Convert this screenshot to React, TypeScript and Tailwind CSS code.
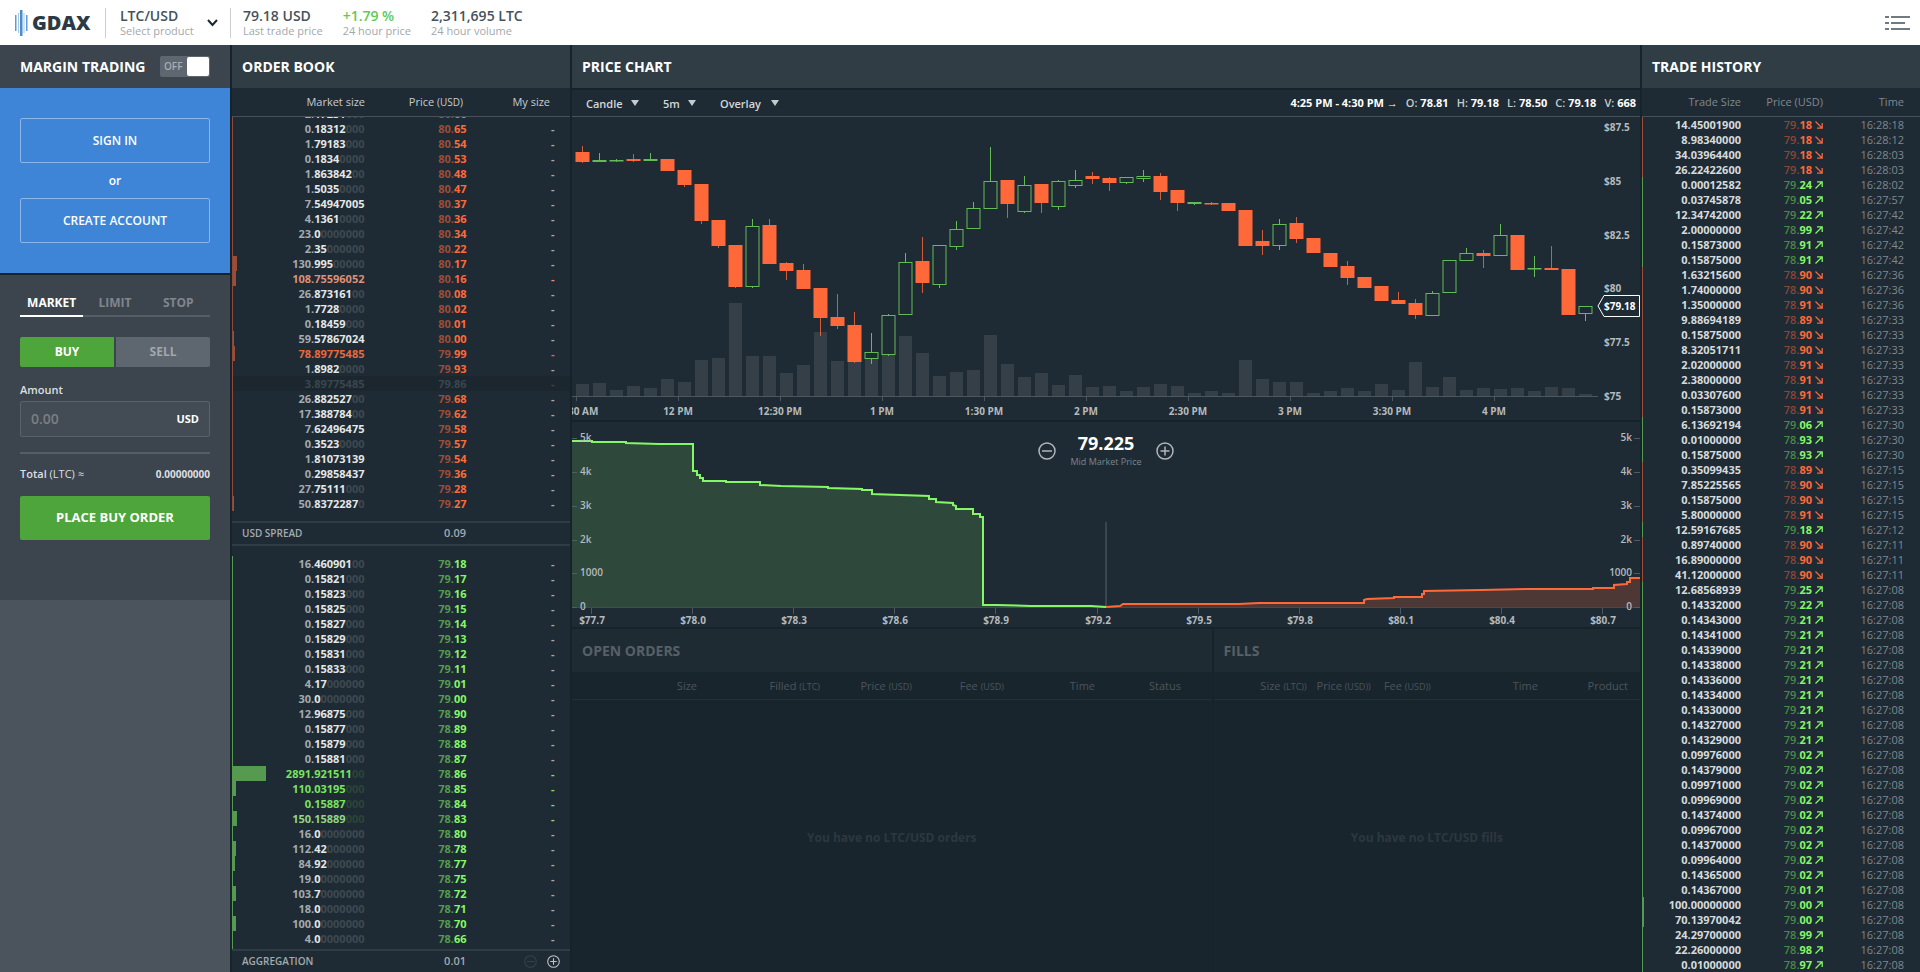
import { useState } from 'react';

type Side = 'ask' | 'bid';
type Tone = 'hot' | 'warm' | 'ghost';

interface BookRow {
  size: string;
  price: string;
  bar?: number;
  tone?: Tone;
}

// size, price, depth bar width, highlight
const asks: BookRow[] = [
  { size: '2.17231000', price: '80.66' },
  { size: '0.18312000', price: '80.65' },
  { size: '1.79183000', price: '80.54' },
  { size: '0.18340000', price: '80.53' },
  { size: '1.86384200', price: '80.48' },
  { size: '1.50350000', price: '80.47' },
  { size: '7.54947005', price: '80.37' },
  { size: '4.13610000', price: '80.36' },
  { size: '23.00000000', price: '80.34' },
  { size: '2.35000000', price: '80.22' },
  { size: '130.99500000', price: '80.17', bar: 5 },
  { size: '108.75596052', price: '80.16', bar: 4, tone: 'warm' },
  { size: '26.87316100', price: '80.08' },
  { size: '1.77280000', price: '80.02' },
  { size: '0.18459000', price: '80.01' },
  { size: '59.57867024', price: '80.00', bar: 2 },
  { size: '78.89775485', price: '79.99', bar: 3, tone: 'hot' },
  { size: '1.89820000', price: '79.93' },
  { size: '3.89775485', price: '79.86', tone: 'ghost' },
  { size: '26.88252700', price: '79.68' },
  { size: '17.38878400', price: '79.62' },
  { size: '7.62496475', price: '79.58' },
  { size: '0.35230000', price: '79.57' },
  { size: '1.81073139', price: '79.54' },
  { size: '0.29858437', price: '79.36' },
  { size: '27.75111000', price: '79.28' },
  { size: '50.83722870', price: '79.27', bar: 2 },
];

const bids: BookRow[] = [
  { size: '16.46090100', price: '79.18' },
  { size: '0.15821000', price: '79.17' },
  { size: '0.15823000', price: '79.16' },
  { size: '0.15825000', price: '79.15' },
  { size: '0.15827000', price: '79.14' },
  { size: '0.15829000', price: '79.13' },
  { size: '0.15831000', price: '79.12' },
  { size: '0.15833000', price: '79.11' },
  { size: '4.17000000', price: '79.01' },
  { size: '30.00000000', price: '79.00' },
  { size: '12.96875000', price: '78.90' },
  { size: '0.15877000', price: '78.89' },
  { size: '0.15879000', price: '78.88' },
  { size: '0.15881000', price: '78.87' },
  { size: '2891.92151100', price: '78.86', bar: 34, tone: 'hot' },
  { size: '110.03195000', price: '78.85', bar: 4, tone: 'hot' },
  { size: '0.15887000', price: '78.84', tone: 'hot' },
  { size: '150.15889000', price: '78.83', bar: 5, tone: 'warm' },
  { size: '16.00000000', price: '78.80' },
  { size: '112.42000000', price: '78.78', bar: 4 },
  { size: '84.92000000', price: '78.77', bar: 3 },
  { size: '19.00000000', price: '78.75' },
  { size: '103.70000000', price: '78.72', bar: 4 },
  { size: '18.00000000', price: '78.71' },
  { size: '100.00000000', price: '78.70', bar: 4 },
  { size: '4.00000000', price: '78.66' },
];

type Trade = [string, string, 'up' | 'down', string];

const trades: Trade[] = [
  ['14.45001900', '79.18', 'down', '16:28:18'],
  ['8.98340000', '79.18', 'down', '16:28:12'],
  ['34.03964400', '79.18', 'down', '16:28:03'],
  ['26.22422600', '79.18', 'down', '16:28:03'],
  ['0.00012582', '79.24', 'up', '16:28:02'],
  ['0.03745878', '79.05', 'up', '16:27:57'],
  ['12.34742000', '79.22', 'up', '16:27:42'],
  ['2.00000000', '78.99', 'up', '16:27:42'],
  ['0.15873000', '78.91', 'up', '16:27:42'],
  ['0.15875000', '78.91', 'up', '16:27:42'],
  ['1.63215600', '78.90', 'down', '16:27:36'],
  ['1.74000000', '78.90', 'down', '16:27:36'],
  ['1.35000000', '78.91', 'down', '16:27:36'],
  ['9.88694189', '78.89', 'down', '16:27:33'],
  ['0.15875000', '78.90', 'down', '16:27:33'],
  ['8.32051711', '78.90', 'down', '16:27:33'],
  ['2.02000000', '78.91', 'down', '16:27:33'],
  ['2.38000000', '78.91', 'down', '16:27:33'],
  ['0.03307600', '78.91', 'down', '16:27:33'],
  ['0.15873000', '78.91', 'down', '16:27:33'],
  ['6.13692194', '79.06', 'up', '16:27:30'],
  ['0.01000000', '78.93', 'up', '16:27:30'],
  ['0.15875000', '78.93', 'up', '16:27:30'],
  ['0.35099435', '78.89', 'down', '16:27:15'],
  ['7.85225565', '78.90', 'down', '16:27:15'],
  ['0.15875000', '78.90', 'down', '16:27:15'],
  ['5.80000000', '78.91', 'down', '16:27:15'],
  ['12.59167685', '79.18', 'up', '16:27:12'],
  ['0.89740000', '78.90', 'down', '16:27:11'],
  ['16.89000000', '78.90', 'down', '16:27:11'],
  ['41.12000000', '78.90', 'down', '16:27:11'],
  ['12.68568939', '79.25', 'up', '16:27:08'],
  ['0.14332000', '79.22', 'up', '16:27:08'],
  ['0.14343000', '79.21', 'up', '16:27:08'],
  ['0.14341000', '79.21', 'up', '16:27:08'],
  ['0.14339000', '79.21', 'up', '16:27:08'],
  ['0.14338000', '79.21', 'up', '16:27:08'],
  ['0.14336000', '79.21', 'up', '16:27:08'],
  ['0.14334000', '79.21', 'up', '16:27:08'],
  ['0.14330000', '79.21', 'up', '16:27:08'],
  ['0.14327000', '79.21', 'up', '16:27:08'],
  ['0.14329000', '79.21', 'up', '16:27:08'],
  ['0.09976000', '79.02', 'up', '16:27:08'],
  ['0.14379000', '79.02', 'up', '16:27:08'],
  ['0.09971000', '79.02', 'up', '16:27:08'],
  ['0.09969000', '79.02', 'up', '16:27:08'],
  ['0.14374000', '79.02', 'up', '16:27:08'],
  ['0.09967000', '79.02', 'up', '16:27:08'],
  ['0.14370000', '79.02', 'up', '16:27:08'],
  ['0.09964000', '79.02', 'up', '16:27:08'],
  ['0.14365000', '79.02', 'up', '16:27:08'],
  ['0.14367000', '79.01', 'up', '16:27:08'],
  ['100.00000000', '79.00', 'up', '16:27:08'],
  ['70.13970042', '79.00', 'up', '16:27:08'],
  ['24.29700000', '78.99', 'up', '16:27:08'],
  ['22.26000000', '78.98', 'up', '16:27:08'],
  ['0.01000000', '78.97', 'up', '16:27:08'],
];

// direction, high, body top, body bottom, low, volume
type Candle = ['u' | 'd', number, number, number, number, number];

const candles: Candle[] = [
  ['d', 29, 35, 45, 46, 12], ['u', 36, 43, 45, 45, 13], ['u', 42, 43, 44, 45, 6],
  ['d', 37, 42, 44, 45, 10], ['u', 36, 42, 44, 44, 8], ['d', 42, 42, 54, 54, 17],
  ['d', 53, 53, 68, 70, 14], ['d', 67, 67, 104, 107, 36], ['d', 103, 103, 129, 131, 38],
  ['d', 128, 128, 170, 171, 93], ['u', 102, 109, 170, 171, 40], ['d', 102, 108, 147, 147, 40],
  ['d', 145, 146, 154, 163, 23], ['d', 147, 153, 172, 172, 31], ['d', 171, 171, 201, 219, 64],
  ['d', 177, 200, 209, 212, 35], ['d', 195, 208, 245, 246, 34], ['u', 216, 235, 242, 247, 37],
  ['u', 197, 198, 238, 239, 41], ['u', 136, 145, 198, 198, 60], ['d', 120, 144, 166, 176, 43],
  ['u', 128, 128, 168, 171, 20], ['u', 104, 112, 130, 133, 24], ['u', 85, 91, 112, 112, 26],
  ['u', 30, 64, 92, 92, 61], ['d', 63, 63, 87, 101, 32], ['u', 59, 68, 95, 96, 19],
  ['d', 67, 67, 86, 96, 23], ['u', 63, 64, 90, 93, 11], ['u', 53, 63, 69, 71, 21],
  ['d', 55, 59, 62, 67, 9], ['d', 60, 61, 66, 74, 10], ['u', 60, 60, 66, 67, 5],
  ['u', 53, 59, 62, 65, 9], ['d', 56, 59, 75, 83, 12], ['d', 73, 73, 86, 94, 10],
  ['u', 85, 85, 87, 88, 3], ['d', 85, 86, 87, 88, 5], ['d', 86, 86, 94, 94, 3],
  ['d', 93, 93, 129, 129, 36], ['d', 113, 124, 129, 138, 17], ['u', 102, 107, 129, 133, 14],
  ['d', 100, 106, 122, 126, 14], ['d', 121, 121, 136, 136, 3], ['d', 136, 136, 150, 150, 5],
  ['d', 144, 149, 161, 168, 8], ['d', 160, 160, 171, 171, 5], ['d', 169, 169, 184, 184, 12],
  ['d', 175, 183, 187, 187, 6], ['d', 182, 186, 198, 202, 34], ['u', 174, 176, 199, 199, 9],
  ['u', 143, 143, 176, 176, 19], ['u', 131, 136, 144, 144, 6], ['d', 133, 136, 139, 151, 8],
  ['u', 107, 118, 139, 139, 7], ['d', 118, 118, 153, 153, 8], ['u', 139, 151, 152, 160, 5],
  ['d', 129, 151, 153, 153, 9], ['d', 152, 152, 198, 198, 8], ['u', 189, 189, 197, 204, 2],
];

const timeTicks = ['11:30 AM', '12 PM', '12:30 PM', '1 PM', '1:30 PM', '2 PM', '2:30 PM', '3 PM', '3:30 PM', '4 PM'];
const priceTicks = ['$87.5', '$85', '$82.5', '$80', '$77.5', '$75'];
const depthTicks = ['0', '1000', '2k', '3k', '4k', '5k'];
const depthPrices = ['$77.7', '$78.0', '$78.3', '$78.6', '$78.9', '$79.2', '$79.5', '$79.8', '$80.1', '$80.4', '$80.7'];

const bidDepth =
  '0,19 20,19 20,20 54,20 54,21 87,22 121,22 121,49 125,49 125,53 128,53 128,56 131,56 131,59 154,59 154,60 188,60 188,63 209,64 256,65 256,66 290,67 290,68 300,68 300,72 357,74 357,77 364,77 364,80 381,81 381,83 384,84 384,87 401,87 401,92 408,92 408,95 411,95 411,183 425,183 459,184 519,184 534,185';
const askDepth =
  '534,185 548,184 551,182 667,182 687,181 792,181 792,178 795,177 822,176 822,175 850,175 850,172 852,172 852,169 909,168 957,167 1021,167 1021,166 1042,166 1042,163 1055,162 1055,160 1058,160 1058,156 1068,156';

function sizeColors(side: Side, tone?: Tone) {
  if (tone === 'ghost') return ['text-[#3a464e]', 'text-[#3a464e]', 'text-[#3a464e]'];
  if (tone === 'hot' && side === 'ask') return ['text-[#e8693f]', 'text-[#e8693f]', 'text-[#5a3a35]'];
  if (tone === 'warm' && side === 'ask') return ['text-[#de9078]', 'text-[#de9078]', 'text-[#5a3a35]'];
  if (tone === 'hot') return ['text-[#7ae35f]', 'text-[#7ae35f]', 'text-[#2b4538]'];
  if (tone === 'warm') return ['text-[#93d685]', 'text-[#93d685]', 'text-[#2b4538]'];
  return ['text-[#a4aaae]', 'text-[#e4e7e8]', 'text-[#3d4951]'];
}

function BookTable({ rows, side }: { rows: BookRow[]; side: Side }) {
  const line = side === 'ask' ? 'border-[#8f4a37]' : 'border-[#559a50]';
  const bar = side === 'ask' ? 'bg-[#9c4d38]' : 'bg-[#559a50]';
  const whole = side === 'ask' ? 'text-[#9c4d38]' : 'text-[#559a50]';
  const cents = side === 'ask' ? 'text-[#ff6939]' : 'text-[#84f766]';

  return (
    <table className={`w-full table-fixed shrink-0 border-collapse border-l ${line} text-[11px] leading-[15px] font-bold`}>
      <colgroup>
        <col className="w-[132px]" />
        <col className="w-[102px]" />
        <col className="w-[88px]" />
        <col className="w-4" />
      </colgroup>
      <tbody>
        {rows.map((row) => {
          const [, int, dec, zeros] = row.size.match(/^(\d+\.)(\d+?)(0*)$/) ?? ['', '', '', ''];
          const [c1, c2, c3] = sizeColors(side, row.tone);
          const [p1, p2] = row.price.split('.');
          const ghost = row.tone === 'ghost';
          return (
            <tr key={row.price} className={ghost ? 'bg-[#1b262e]' : ''}>
              <td className="relative h-[15px] p-0 text-right">
                {row.bar && <span className={`absolute left-0 top-0 h-full ${bar}`} style={{ width: row.bar - 1 }} />}
                <span className={c1}>{int}</span>
                <span className={c2}>{dec}</span>
                <span className={c3}>{zeros}</span>
              </td>
              <td className="h-[15px] p-0 text-right">
                <span className={ghost ? 'text-[#3a464e]' : whole}>{p1}.</span>
                <span className={ghost ? 'text-[#3a464e]' : cents}>{p2}</span>
              </td>
              <td className={`h-[15px] p-0 text-right ${row.tone ? c1 : 'text-[#a4aaae]'}`}>-</td>
              <td className="p-0" />
            </tr>
          );
        })}
      </tbody>
    </table>
  );
}

function CircleIcon({ plus, size }: { plus?: boolean; size: number }) {
  return (
    <svg width={size} height={size} viewBox="0 0 18 18" fill="none" stroke="currentColor" strokeWidth="1.5">
      <circle cx="9" cy="9" r="8" />
      <path d={plus ? 'M4.5 9h9M9 4.5v9' : 'M4 9h10'} />
    </svg>
  );
}

function PanelTitle({ children, muted }: { children: string; muted?: boolean }) {
  return (
    <h2
      className={`flex h-[43px] shrink-0 items-center px-2.5 text-sm font-bold ${
        muted ? 'bg-[#1f2b33] text-[#566067]' : 'bg-[#303d45] text-white'
      }`}
    >
      {children}
    </h2>
  );
}

function Header() {
  const stats = [
    ['79.18 USD', 'Last trade price', 'text-[#45525b]'],
    ['+1.79 %', '24 hour price', 'text-[#61c954]'],
    ['2,311,695 LTC', '24 hour volume', 'text-[#45525b]'],
  ];
  return (
    <header className="flex h-[45px] shrink-0 items-center bg-white pl-[15px] pr-2.5">
      <a href="#" className="flex w-[90px] items-center gap-1" aria-label="GDAX">
        <svg width="13" height="26" viewBox="0 0 13 26">
          <path d="M0 5h1.500v16H0zM11 5h1.500v16H11z" fill="#5f9bd5" />
          <path d="M5 0h2.500v26H5z" fill="#4a8ccd" />
          <path d="M3 3h1v20H3zM8.500 3h1v20h-1z" fill="#a9c8e8" />
        </svg>
        <span className="text-xl leading-[26px] font-extrabold text-[#2d3a45]">GDAX</span>
      </a>
      <button className="flex h-[30px] w-[126px] items-center justify-between border-x border-[#c9cdd0] pl-3.5 pr-3 text-left">
        <span className="flex flex-col">
          <span className="text-sm leading-4 font-semibold text-[#45525b]">LTC/USD</span>
          <span className="text-[11px] leading-[13px] text-[#a3a8ac]">Select product</span>
        </span>
        <svg width="11" height="8" viewBox="0 0 11 8" fill="none" stroke="#1c2830" strokeWidth="2">
          <path d="M1 1l4.500 5L10 1" />
        </svg>
      </button>
      <dl className="flex gap-5 pl-3">
        {stats.map(([value, label, color]) => (
          <div key={label} className="flex flex-col">
            <dd className={`text-sm leading-4 font-semibold ${color}`}>{value}</dd>
            <dt className="text-[11px] leading-[13px] text-[#a3a8ac]">{label}</dt>
          </div>
        ))}
      </dl>
      <button className="ml-auto" aria-label="Menu">
        <svg width="25" height="14" viewBox="0 0 25 14" fill="#6f7a81">
          <path d="M0 0h4v2H0zM6 0h19v2H6zM0 6h4v2H0zM6 6h14v2H6zM0 12h4v2H0zM6 12h19v2H6z" />
        </svg>
      </button>
    </header>
  );
}

function Sidebar() {
  const [tab, setTab] = useState('MARKET');
  const [side, setSide] = useState('BUY');

  return (
    <aside className="flex flex-col bg-[#4b535d] text-white">
      <div className="flex h-[43px] items-center justify-between bg-[#3c454e] px-5">
        <h2 className="text-sm font-bold">MARGIN TRADING</h2>
        <button role="switch" aria-checked="false" className="flex h-[21px] w-[50px] items-center justify-between rounded-xs bg-[#5e666f] pl-1 pr-px text-[10px] font-semibold text-[#a8adb2]">
          OFF
          <span className="h-[19px] w-[22px] rounded-xs bg-white" />
        </button>
      </div>

      <div className="flex flex-col bg-[#3e85d8] px-5 py-[30px] text-xs font-semibold">
        <button className="h-[45px] rounded-xs border border-[#8bb6e8]">SIGN IN</button>
        <p className="py-2 text-center leading-[19px]">or</p>
        <button className="h-[45px] rounded-xs border border-[#8bb6e8]">CREATE ACCOUNT</button>
      </div>

      <form className="flex flex-col border-t-2 border-[#17232b] bg-[#3c454e] px-5 pb-[60px]" onSubmit={(e) => e.preventDefault()}>
        <div className="mt-4 grid grid-cols-3 text-xs font-bold">
          {['MARKET', 'LIMIT', 'STOP'].map((name) => (
            <button
              key={name}
              type="button"
              onClick={() => setTab(name)}
              className={`h-[26px] border-b-2 ${tab === name ? 'border-white text-white' : 'border-[#555d66] text-[#80868c]'}`}
            >
              {name}
            </button>
          ))}
        </div>
        <div className="mt-5 grid grid-cols-2 gap-0.5 text-xs font-bold">
          <button type="button" onClick={() => setSide('BUY')} className={`h-[30px] rounded-l-xs ${side === 'BUY' ? 'bg-[#4ea53c] text-white' : 'bg-[#5e666f] text-[#a2a7ac]'}`}>
            BUY
          </button>
          <button type="button" onClick={() => setSide('SELL')} className={`h-[30px] rounded-r-xs ${side === 'SELL' ? 'bg-[#e0552b] text-white' : 'bg-[#5e666f] text-[#a2a7ac]'}`}>
            SELL
          </button>
        </div>
        <label htmlFor="amount" className="mt-[15px] text-[11px] leading-[15px] font-semibold text-[#dcdfe1]">
          Amount
        </label>
        <div className="mt-1 flex h-9 items-center rounded-xs border border-[#59616a] bg-[#434c55] px-2.5">
          <input id="amount" placeholder="0.00" className="min-w-0 flex-1 bg-transparent text-sm font-semibold outline-none placeholder:text-[#7d7f80]" />
          <span className="text-[11px] font-bold">USD</span>
        </div>
        <hr className="mt-[15px] border-t-2 border-[#555d66]" />
        <div className="mt-2.5 flex h-5 items-center justify-between text-[11px] font-semibold text-[#dcdfe1]">
          <span>
            Total <span className="font-normal">(LTC) ≈</span>
          </span>
          <span className="text-[10px] font-bold">0.00000000</span>
        </div>
        <button type="submit" className="mt-3 h-11 rounded-xs bg-[#4ea53c] text-[13px] font-bold">
          PLACE BUY ORDER
        </button>
      </form>
    </aside>
  );
}

function OrderBook() {
  return (
    <section className="flex min-h-0 flex-col bg-[#1f2b34]">
      <PanelTitle>ORDER BOOK</PanelTitle>
      <div className="grid h-[29px] shrink-0 grid-cols-[133px_98px_87px_auto] items-center border-b border-[#46525a] text-right text-[11px] text-[#c6cbce]">
        <span>Market size</span>
        <span>
          Price <span className="text-[10px]">(USD)</span>
        </span>
        <span>My size</span>
      </div>
      <div className="flex min-h-0 flex-1 flex-col justify-end overflow-hidden pb-2.5">
        <BookTable rows={asks} side="ask" />
      </div>
      <div className="flex h-[25px] shrink-0 items-center border-y-2 border-[#303c44] px-2.5 text-[10px] font-semibold text-[#a4aaae]">
        <span className="w-[154px]">USD SPREAD</span>
        <span className="w-[70px] text-right text-[11px]">0.09</span>
      </div>
      <div className="flex min-h-0 flex-1 flex-col overflow-hidden pt-2.5">
        <BookTable rows={bids} side="bid" />
        <div className="flex-1 border-l border-[#559a50]" />
      </div>
      <div className="flex h-[23px] shrink-0 items-center border-t-2 border-[#303c44] px-2.5 text-[10px] font-semibold text-[#a4aaae]">
        <span className="w-[154px]">AGGREGATION</span>
        <span className="w-[70px] text-right text-[11px]">0.01</span>
        <button className="ml-auto text-[#36424a]" aria-label="Decrease aggregation">
          <CircleIcon size={13} />
        </button>
        <button className="ml-2.5 text-[#c0c5c8]" aria-label="Increase aggregation">
          <CircleIcon plus size={13} />
        </button>
      </div>
    </section>
  );
}

function PriceChart() {
  return (
    <svg viewBox="0 0 1068 303" className="block w-full text-[10px] font-bold" fill="#b4babd">
      {candles.map(([dir, high, top, bottom, low, vol], i) => {
        const x = 3 + i * 17;
        const color = dir === 'u' ? '#62bb55' : '#ff6939';
        return (
          <g key={i}>
            <rect x={x + 1} y={279 - vol} width="13" height={vol} fill="#343f47" />
            <path d={`M${x + 7.5} ${high}V${top}M${x + 7.5} ${bottom}V${low}`} stroke={color} opacity={dir === 'u' ? 1 : 0.8} />
            <rect
              x={x + 1}
              y={top + 0.5}
              width="13"
              height={Math.max(bottom - top - 1, 0.5)}
              fill={dir === 'u' ? '#1f2b34' : color}
              stroke={color}
            />
          </g>
        );
      })}
      <path d="M0 279.500H1026" stroke="#4c575f" />
      {timeTicks.map((label, i) => (
        <g key={label} textAnchor="middle">
          <path d={`M${4.5 + i * 102} 279v5`} stroke="#4c575f" />
          <text x={4 + i * 102} y="298">{label}</text>
        </g>
      ))}
      {priceTicks.map((label, i) => (
        <text key={label} x="1032" y={14 + Math.round(i * 53.8)}>{label}</text>
      ))}
      <path d="M1026 189L1032 178.500H1067.500V199.500H1032Z" fill="#1f2b34" stroke="#fff" />
      <text x="1032" y="193" fill="#fff">$79.18</text>
    </svg>
  );
}

function DepthChart() {
  return (
    <svg viewBox="0 0 1068 205" className="block w-full text-[10px] font-semibold" fill="#b4babd">
      <path d="M534 100V185" stroke="#3a464e" strokeWidth="2" />
      <polygon points={`0,185 ${bidDepth}`} fill="#2e493b" />
      <polygon points={`${askDepth} 1068,185`} fill="#4e3835" />
      <path d="M0 185.500H1068" stroke="#3f4c53" />
      <polyline points={bidDepth} fill="none" stroke="#84f766" strokeWidth="2" />
      <polyline points={askDepth} fill="none" stroke="#ff6939" strokeWidth="2" />
      {depthTicks.map((label, i) => {
        const y = 185 - Math.round(i * 33.7);
        return (
          <g key={label}>
            <path d={`M0 ${y + 0.5}h5M1062 ${y + 0.5}h6`} stroke="#4f5c60" />
            <text x="8" y={y + 3}>{label}</text>
            <text x="1060" y={y + 3} textAnchor="end">{label}</text>
          </g>
        );
      })}
      {depthPrices.map((label, i) => {
        const x = 20 + Math.round(i * 101.1);
        return (
          <g key={label} textAnchor="middle" className="font-bold">
            <path d={`M${x - 0.5} 186v6`} stroke="#4c575f" />
            <text x={x} y="202">{label}</text>
          </g>
        );
      })}
    </svg>
  );
}

function ChartSelect({ label, options, width }: { label: string; options: string[]; width: string }) {
  return (
    <label className={`relative flex items-center ${width}`}>
      <select aria-label={label} className="w-full appearance-none bg-transparent text-[11px] leading-[15px] font-semibold text-[#d3d7d9] outline-none">
        {options.map((option) => (
          <option key={option}>{option}</option>
        ))}
      </select>
      <svg width="8" height="6" viewBox="0 0 8 6" className="pointer-events-none absolute right-0 top-1 fill-[#c6cbce]">
        <path d="M0 0h8L4 6z" />
      </svg>
    </label>
  );
}

interface Column {
  name: string;
  unit?: string;
  width: string;
}

const orderColumns: Column[] = [
  { name: 'Size', width: 'w-[125px]' },
  { name: 'Filled', unit: '(LTC)', width: 'w-[123px]' },
  { name: 'Price', unit: '(USD)', width: 'w-[92px]' },
  { name: 'Fee', unit: '(USD)', width: 'w-[92px]' },
  { name: 'Time', width: 'w-[91px]' },
  { name: 'Status', width: 'w-[86px]' },
  { name: '', width: 'w-[31px]' },
];

const fillColumns: Column[] = [
  { name: 'Size', unit: '(LTC))', width: 'w-[93px]' },
  { name: 'Price', unit: '(USD))', width: 'w-[64px]' },
  { name: 'Fee', unit: '(USD))', width: 'w-[60px]' },
  { name: 'Time', width: 'w-[107px]' },
  { name: 'Product', width: 'w-[90px]' },
  { name: '', width: 'w-[12px]' },
];

function EmptyPanel({ title, columns, message }: { title: string; columns: Column[]; message: string }) {
  return (
    <section className="flex min-w-0 flex-col bg-[#19252d]">
      <PanelTitle muted>{title}</PanelTitle>
      <table className="w-full table-fixed border-collapse border-b border-[#233038] text-[11px] text-[#4a555c]">
        <thead>
          <tr>
            {columns.map((col) => (
              <th key={col.name} className={`h-[27px] p-0 pt-0.5 text-right font-normal whitespace-nowrap ${col.width}`}>
                {col.name} {col.unit && <span className="text-[9px]">{col.unit}</span>}
              </th>
            ))}
          </tr>
        </thead>
      </table>
      <p className="flex flex-1 items-center justify-center pt-1 text-xs font-bold text-[#2c383f]">{message}</p>
    </section>
  );
}

function Charts() {
  const ohlc = [
    ['O:', '78.81'],
    ['H:', '79.18'],
    ['L:', '78.50'],
    ['C:', '79.18'],
    ['V:', '668'],
  ];
  return (
    <main className="flex min-h-0 flex-col gap-0.5">
      <PanelTitle>PRICE CHART</PanelTitle>
      <section className="bg-[#1f2b34]">
        <div className="flex h-[27px] items-center justify-between border-b border-[#46525a] pl-3.5 pr-1">
          <div className="flex gap-6">
            <ChartSelect label="Chart type" options={['Candle', 'Line']} width="w-[53px]" />
            <ChartSelect label="Interval" options={['5m', '1m', '15m', '1h']} width="w-[33px]" />
            <ChartSelect label="Overlay" options={['Overlay', 'EMA12']} width="w-[59px]" />
          </div>
          <div className="flex gap-2 text-[11px] font-bold text-white">
            <span>4:25 PM - 4:30 PM →</span>
            {ohlc.map(([key, value]) => (
              <span key={key}>
                <span className="font-semibold text-[#c6cbce]">{key}</span> {value}
              </span>
            ))}
          </div>
        </div>
        <PriceChart />
      </section>
      <section className="relative bg-[#1f2b34]">
        <DepthChart />
        <div className="absolute inset-x-0 top-2.5 flex justify-center text-[#b0b6ba]">
          <div className="flex w-[136px] items-center justify-between">
            <button aria-label="Zoom out">
              <CircleIcon size={18} />
            </button>
            <div className="text-center">
              <p className="text-lg leading-[22px] font-bold text-white">79.225</p>
              <p className="text-[9px] leading-4 text-[#7c858b]">Mid Market Price</p>
            </div>
            <button aria-label="Zoom in">
              <CircleIcon plus size={18} />
            </button>
          </div>
        </div>
      </section>
      <div className="grid min-h-0 flex-1 grid-cols-[3fr_2fr] gap-0.5">
        <EmptyPanel title="OPEN ORDERS" columns={orderColumns} message="You have no LTC/USD orders" />
        <EmptyPanel title="FILLS" columns={fillColumns} message="You have no LTC/USD fills" />
      </div>
    </main>
  );
}

function TradeHistory() {
  return (
    <section className="min-h-0 overflow-hidden bg-[#1f2b34]">
      <PanelTitle>TRADE HISTORY</PanelTitle>
      <table className="w-full table-fixed border-separate border-spacing-0 text-right text-[11px] leading-[15px]">
        <thead>
          <tr className="text-[#7f888e]">
            <th className="h-[29px] w-[99px] border-b border-[#46525a] p-0 pb-px font-normal">Trade Size</th>
            <th className="w-[82px] border-b border-[#46525a] p-0 pb-px font-normal">Price (USD)</th>
            <th className="border-b border-[#46525a] p-0 pr-4 pb-px font-normal">Time</th>
          </tr>
        </thead>
        <tbody>
          {trades.map(([size, price, dir, time], i) => {
            const up = dir === 'up';
            const [whole, cents] = price.split('.');
            const bar = Math.floor(parseFloat(size) / 35);
            return (
              <tr key={i}>
                <td className={`relative h-[15px] border-l p-0 font-bold text-[#d6dadc] ${up ? 'border-[#559a50]' : 'border-[#9c4d38]'}`}>
                  {bar > 1 && <span className="absolute left-0 top-0 h-full bg-[#559a50]" style={{ width: bar - 1 }} />}
                  {size}
                </td>
                <td className="h-[15px] p-0">
                  <span className="flex items-center justify-end gap-[3px]">
                    <span className="font-semibold">
                      <span className={up ? 'text-[#4a8a48]' : 'text-[#8c4638]'}>{whole}.</span>
                      <span className={`font-bold ${up ? 'text-[#84f766]' : 'text-[#ff6939]'}`}>{cents}</span>
                    </span>
                    <svg width="8" height="8" viewBox="0 0 8 8" fill="none" stroke={up ? '#84f766' : '#f0683f'}>
                      <path d={up ? 'M.5 7.500L7 1M2 .8h5.200V6' : 'M.5.5L7 7M7.200 2v5.200H2'} strokeWidth="1.3" />
                    </svg>
                  </span>
                </td>
                <td className="h-[15px] p-0 pr-4 text-[#7f888e]">{time}</td>
              </tr>
            );
          })}
        </tbody>
      </table>
    </section>
  );
}

export default function App() {
  return (
    <div className="flex h-screen flex-col overflow-hidden bg-[#17232b] font-['Open_Sans',sans-serif]">
      <Header />
      <div className="grid min-h-0 flex-1 grid-cols-[230px_338px_minmax(0,1fr)_278px] grid-rows-[minmax(0,1fr)] gap-0.5">
        <Sidebar />
        <OrderBook />
        <Charts />
        <TradeHistory />
      </div>
    </div>
  );
}
